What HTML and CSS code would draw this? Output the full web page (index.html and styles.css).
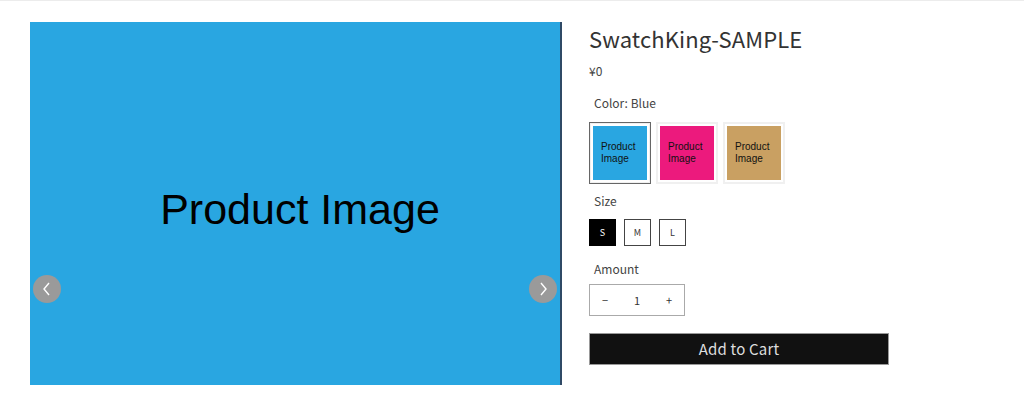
FILE: index.html
```html
<!DOCTYPE html>
<html lang="ja">
<head>
<meta charset="utf-8">
<link rel="stylesheet" href="styles.css">
</head>
<body>
<div class="topline"></div>
<main class="product">
  <div class="gallery">
    <div class="slide">Product Image</div>
    <button class="nav prev" aria-label="prev">
      <svg width="12" height="16" viewBox="0 0 12 16"><path d="M8 2 L3 8 L8 14" fill="none" stroke="#fff" stroke-width="1.4"/></svg>
    </button>
    <button class="nav next" aria-label="next">
      <svg width="12" height="16" viewBox="0 0 12 16"><path d="M4 2 L9 8 L4 14" fill="none" stroke="#fff" stroke-width="1.4"/></svg>
    </button>
  </div>
  <div class="info">
    <h1 class="title">SwatchKing-SAMPLE</h1>
    <div class="price">¥0</div>
    <div class="label label-color">Color: Blue</div>
    <div class="swatches">
      <div class="swatch selected"><div class="sw-img blue">Product<br>Image</div></div>
      <div class="swatch"><div class="sw-img pink">Product<br>Image</div></div>
      <div class="swatch"><div class="sw-img tan">Product<br>Image</div></div>
    </div>
    <div class="label label-size">Size</div>
    <div class="sizes">
      <div class="size active">S</div>
      <div class="size">M</div>
      <div class="size">L</div>
    </div>
    <div class="label label-amount">Amount</div>
    <div class="qty">
      <span>−</span><span>1</span><span>+</span>
    </div>
    <button class="cart">Add to Cart</button>
  </div>
</main>
</body>
</html>
```
FILE: styles.css
```css
html, body { margin: 0; padding: 0; background: #fff; }
body { font-family: "Noto Sans CJK JP", "Noto Sans", sans-serif; color: #333; }
.topline { height: 1px; background: #ececec; }
.product { display: flex; padding: 21px 0 0 30px; gap: 27px; align-items: flex-start; }
.gallery { position: relative; width: 532px; height: 363px; }
.slide {
  width: 532px; height: 363px; background: #29a6e1;
  border-right: 2px solid #2f4a66;
  display: flex; align-items: center; justify-content: center;
  font-family: "Liberation Sans", Arial, sans-serif; font-size: 43px; color: #000;
  padding-top: 12px; box-sizing: border-box; padding-left: 10px;
}
.nav {
  position: absolute; top: 253px; width: 28px; height: 28px; border-radius: 50%;
  background: #9a9a9a; border: 0; padding: 0;
  display: flex; align-items: center; justify-content: center;
}
.nav.prev { left: 3px; }
.nav.next { left: 499px; }
.info { display: flex; flex-direction: column; align-items: flex-start; }
.title { font-size: 22px; font-weight: 400; margin: 1px 0 0; line-height: 30px; color: #333; letter-spacing: 0.1px; }
.price { font-size: 12px; margin-top: 9px; line-height: 18px; color: #444; }
.label { font-size: 12px; margin-left: 5px; line-height: 18px; color: #444; }
.label-color { margin-top: 14px; }
.label-size { margin-top: 8px; }
.label-amount { margin-top: 14px; }
.swatches { display: flex; gap: 5px; margin-top: 10px; }
.swatch {
  width: 62px; height: 62px; box-sizing: border-box; border: 2px solid #f0f0f0;
  display: flex; align-items: center; justify-content: center;
}
.swatch.selected { border: 1px solid #666; box-shadow: inset 0 0 0 1px #f0f0f0; }
.sw-img {
  width: 54px; height: 54px; box-sizing: border-box; padding-left: 8px;
  display: flex; align-items: center;
  font-family: "Liberation Sans", Arial, sans-serif; font-size: 10px; line-height: 12px; color: #111;
}
.blue { background: #29a6e1; }
.pink { background: #ec1a7d; }
.tan { background: #c9a062; }
.sizes { display: flex; gap: 8px; margin-top: 9px; }
.size {
  width: 27px; height: 27px; box-sizing: border-box; border: 1px solid #444;
  display: flex; align-items: center; justify-content: center;
  font-size: 9px; color: #333;
}
.size.active { background: #000; color: #fff; border-color: #000; }
.qty {
  margin-top: 6px; width: 96px; height: 32px; box-sizing: border-box;
  border: 1px solid #aaa; display: flex; align-items: center; justify-content: space-between;
  font-size: 11px; color: #333; padding: 0 12px;
}
.cart {
  margin-top: 17px; width: 300px; height: 32px; background: #111; color: #ddd;
  border: 1px solid #999; font-family: "Noto Sans CJK JP", "Noto Sans", sans-serif;
  font-size: 15px; letter-spacing: 0.2px; padding: 0; line-height: 30px;
}
```
